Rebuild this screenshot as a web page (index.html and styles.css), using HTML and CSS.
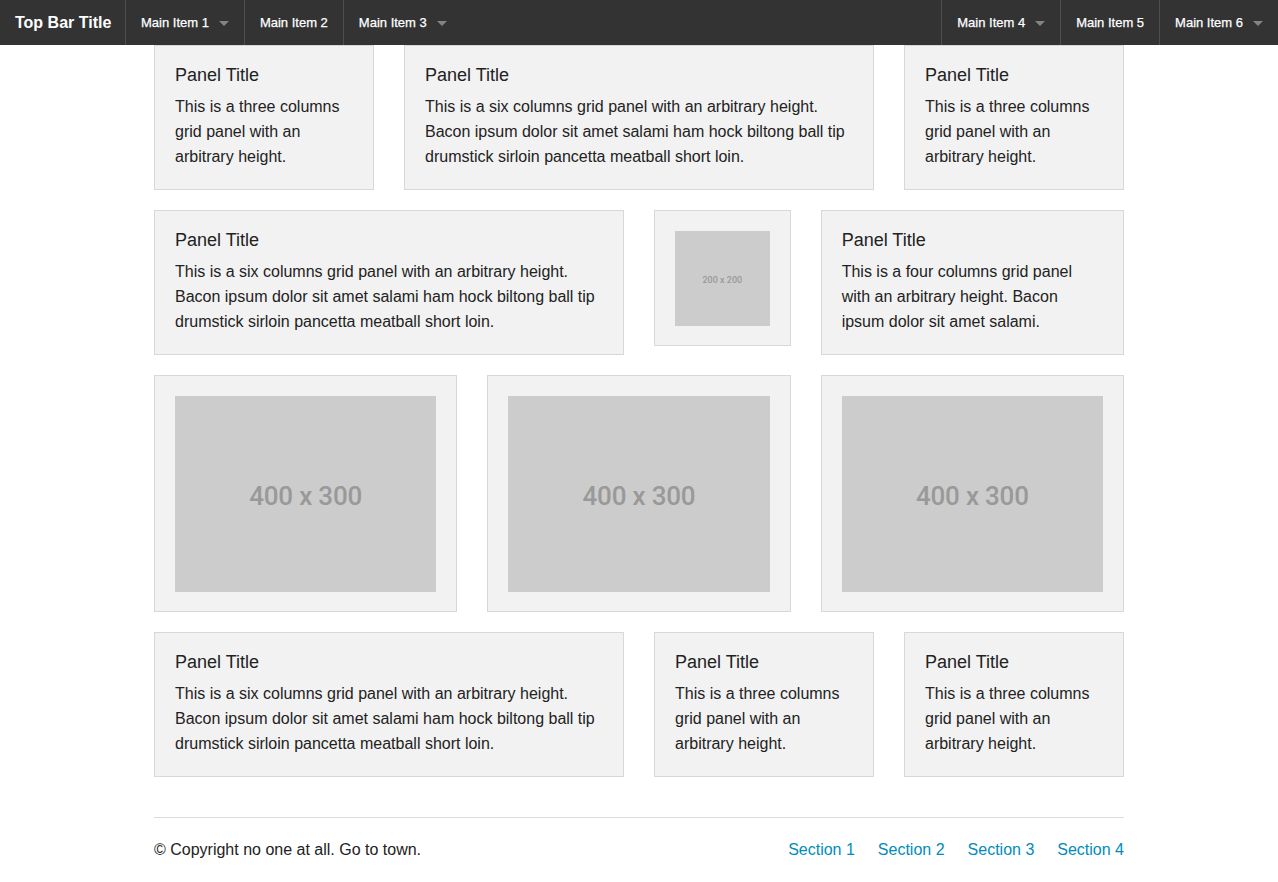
FILE: index.html
```html
<!DOCTYPE html>
<html lang="en">
<head>
<meta charset="utf-8">
<title>Grid Panels</title>
<link rel="stylesheet" href="styles.css">
</head>
<body>
<nav class="top-bar">
  <div class="name">Top Bar Title</div>
  <ul class="menu">
    <li class="has-dropdown"><a href="#">Main Item 1</a></li>
    <li><a href="#">Main Item 2</a></li>
    <li class="has-dropdown"><a href="#">Main Item 3</a></li>
  </ul>
  <ul class="menu right">
    <li class="has-dropdown"><a href="#">Main Item 4</a></li>
    <li><a href="#">Main Item 5</a></li>
    <li class="has-dropdown"><a href="#">Main Item 6</a></li>
  </ul>
</nav>

<main class="grid">
  <div class="panel span-3">
    <h5>Panel Title</h5>
    <p>This is a three columns grid panel with an arbitrary height.</p>
  </div>
  <div class="panel span-6">
    <h5>Panel Title</h5>
    <p>This is a six columns grid panel with an arbitrary height. Bacon ipsum dolor sit amet salami ham hock biltong ball tip drumstick sirloin pancetta meatball short loin.</p>
  </div>
  <div class="panel span-3">
    <h5>Panel Title</h5>
    <p>This is a three columns grid panel with an arbitrary height.</p>
  </div>

  <div class="panel span-6">
    <h5>Panel Title</h5>
    <p>This is a six columns grid panel with an arbitrary height. Bacon ipsum dolor sit amet salami ham hock biltong ball tip drumstick sirloin pancetta meatball short loin.</p>
  </div>
  <div class="panel media span-2">
    <div class="placeholder square small"><span>200 x 200</span></div>
  </div>
  <div class="panel span-4">
    <h5>Panel Title</h5>
    <p>This is a four columns grid panel with an arbitrary height. Bacon ipsum dolor sit amet salami.</p>
  </div>

  <div class="panel media span-4">
    <div class="placeholder wide"><span>400 x 300</span></div>
  </div>
  <div class="panel media span-4">
    <div class="placeholder wide"><span>400 x 300</span></div>
  </div>
  <div class="panel media span-4">
    <div class="placeholder wide"><span>400 x 300</span></div>
  </div>

  <div class="panel span-6">
    <h5>Panel Title</h5>
    <p>This is a six columns grid panel with an arbitrary height. Bacon ipsum dolor sit amet salami ham hock biltong ball tip drumstick sirloin pancetta meatball short loin.</p>
  </div>
  <div class="panel span-3">
    <h5>Panel Title</h5>
    <p>This is a three columns grid panel with an arbitrary height.</p>
  </div>
  <div class="panel span-3">
    <h5>Panel Title</h5>
    <p>This is a three columns grid panel with an arbitrary height.</p>
  </div>
</main>

<footer class="footer">
  <hr class="rule">
  <div class="footer-row">
    <p class="copy">© Copyright no one at all. Go to town.</p>
    <ul class="links">
      <li><a href="#">Section 1</a></li>
      <li><a href="#">Section 2</a></li>
      <li><a href="#">Section 3</a></li>
      <li><a href="#">Section 4</a></li>
    </ul>
  </div>
</footer>
</body>
</html>
```

FILE: styles.css
```css
* { box-sizing: border-box; }

body {
  margin: 0;
  background: #fff;
  color: #222;
  font-family: "Liberation Sans", Arial, sans-serif;
  font-size: 16px;
}

/* Top bar */
.top-bar {
  display: flex;
  height: 45px;
  background: #333;
}
.name {
  padding: 0 15px;
  line-height: 45px;
  font-size: 16px;
  font-weight: bold;
  color: #fff;
  width: 125px;
  white-space: nowrap;
}
.menu {
  display: flex;
  list-style: none;
  margin: 0;
  padding: 0;
}
.menu.right { margin-left: auto; }
.menu li {
  position: relative;
  border-left: 1px solid #4e4e4e;
}
.menu a {
  display: block;
  padding: 0 15px;
  line-height: 45px;
  font-size: 13px;
  color: #fff;
  text-decoration: none;
  white-space: nowrap;
  -webkit-text-stroke: 0.25px #fff;
}
.menu .has-dropdown a { padding-right: 35px; }
.menu .has-dropdown a::after {
  content: "";
  position: absolute;
  right: 15px;
  top: 50%;
  margin-top: -2px;
  border: 5px solid transparent;
  border-top-color: rgba(255, 255, 255, 0.4);
  border-bottom-width: 0;
}

/* Grid */
.grid {
  display: grid;
  grid-template-columns: repeat(12, 1fr);
  column-gap: 30px;
  row-gap: 20px;
  align-items: start;
  max-width: 970px;
  margin: 0 auto;
}
.span-2 { grid-column: span 2; }
.span-3 { grid-column: span 3; }
.span-4 { grid-column: span 4; }
.span-6 { grid-column: span 6; }

.panel {
  background: #f2f2f2;
  border: 1px solid #d8d8d8;
  padding: 20px;
}
.panel.media { padding-bottom: 19px; }
.panel h5 {
  margin: 0 0 10px;
  font-size: 18px;
  line-height: 18px;
  font-weight: normal;
  color: #222;
}
.panel p {
  margin: 0;
  font-size: 16px;
  line-height: 25px;
}

.placeholder {
  display: flex;
  align-items: center;
  justify-content: center;
  background: #ccc;
  color: #999;
  font-family: Roboto, "DejaVu Sans", sans-serif;
  font-weight: 500;
}
.placeholder span { padding-top: 4px; }
.placeholder.wide {
  aspect-ratio: 4 / 3;
  font-size: 26px;
  letter-spacing: -0.2px;
}
.placeholder.square {
  aspect-ratio: 1 / 1;
}
.placeholder.small {
  font-size: 9px;
}

/* Footer */
.footer {
  max-width: 970px;
  margin: 40px auto 0;
}
.rule {
  margin: 0 0 19px;
  border: 0;
  border-top: 1px solid #ddd;
  height: 0;
}
.footer-row {
  display: flex;
  justify-content: space-between;
  align-items: center;
  line-height: 25px;
}
.copy { margin: 0; }
.links {
  display: flex;
  gap: 23px;
  list-style: none;
  margin: 0;
  padding: 0;
}
.links a {
  color: #008cba;
  text-decoration: none;
}
```
